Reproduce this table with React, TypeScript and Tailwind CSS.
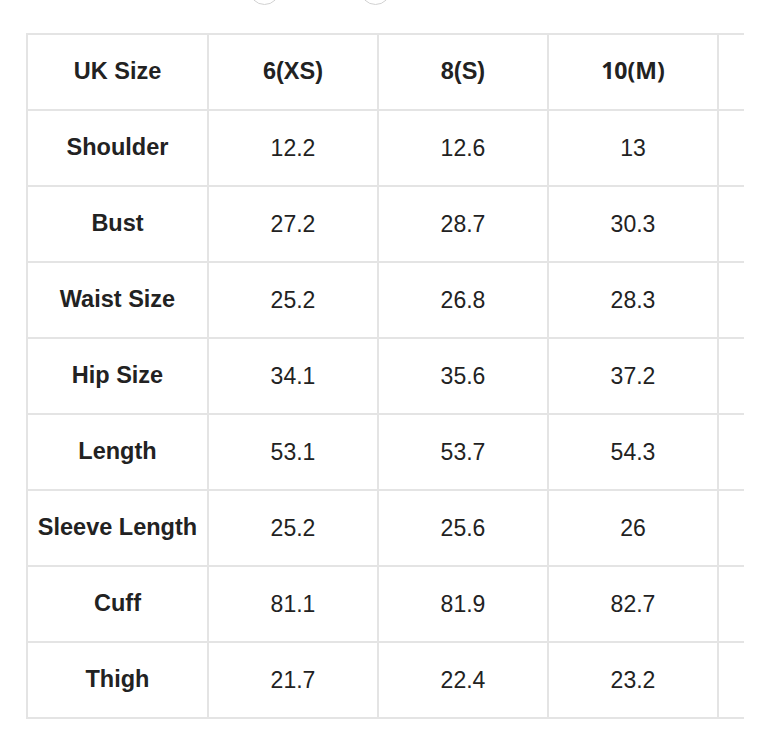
const rows: [string, string, string, string][] = [
  ["Shoulder", "12.2", "12.6", "13"],
  ["Bust", "27.2", "28.7", "30.3"],
  ["Waist Size", "25.2", "26.8", "28.3"],
  ["Hip Size", "34.1", "35.6", "37.2"],
  ["Length", "53.1", "53.7", "54.3"],
  ["Sleeve Length", "25.2", "25.6", "26"],
  ["Cuff", "81.1", "81.9", "82.7"],
  ["Thigh", "21.7", "22.4", "23.2"],
];

const cell =
  "h-[76px] flex items-center justify-center border-r-2 border-b-2 border-[#e4e4e4] whitespace-nowrap";

const App = () => {
  return (
    <div className="min-h-screen bg-white text-[#222] font-['Liberation_Sans',Arial,sans-serif]">
      <div className="h-[33px] flex pl-[249px] gap-[80px] overflow-hidden">
        <span className="w-[31px] h-[31px] -mt-[26px] rounded-full border border-[#d2d2d2]" />
        <span className="w-[31px] h-[31px] -mt-[26px] rounded-full border border-[#d2d2d2]" />
      </div>

      <div className="ml-[26px] w-[718px] overflow-hidden">
        <div className="grid w-max grid-cols-[181px_170px_170px_170px_170px] border-l-2 border-t-2 border-[#e4e4e4] text-[23.5px]">
          <div className={`${cell} font-bold`}>UK Size</div>
          <div className={`${cell} font-bold`}>6(XS)</div>
          <div className={`${cell} font-bold`}>8(S)</div>
          <div className={`${cell} font-bold font-['Open_Sans',sans-serif] text-[23px] pb-[3px]`}>10(M)</div>
          <div className={cell} />

          {rows.map((r) => (
            <div key={r[0]} className="contents">
              <div className={`${cell} font-bold`}>{r[0]}</div>
              <div className={`${cell} text-[23px]`}>{r[1]}</div>
              <div className={`${cell} text-[23px]`}>{r[2]}</div>
              <div className={`${cell} text-[23px]`}>{r[3]}</div>
              <div className={cell} />
            </div>
          ))}
        </div>
      </div>
    </div>
  );
};

export default App;
